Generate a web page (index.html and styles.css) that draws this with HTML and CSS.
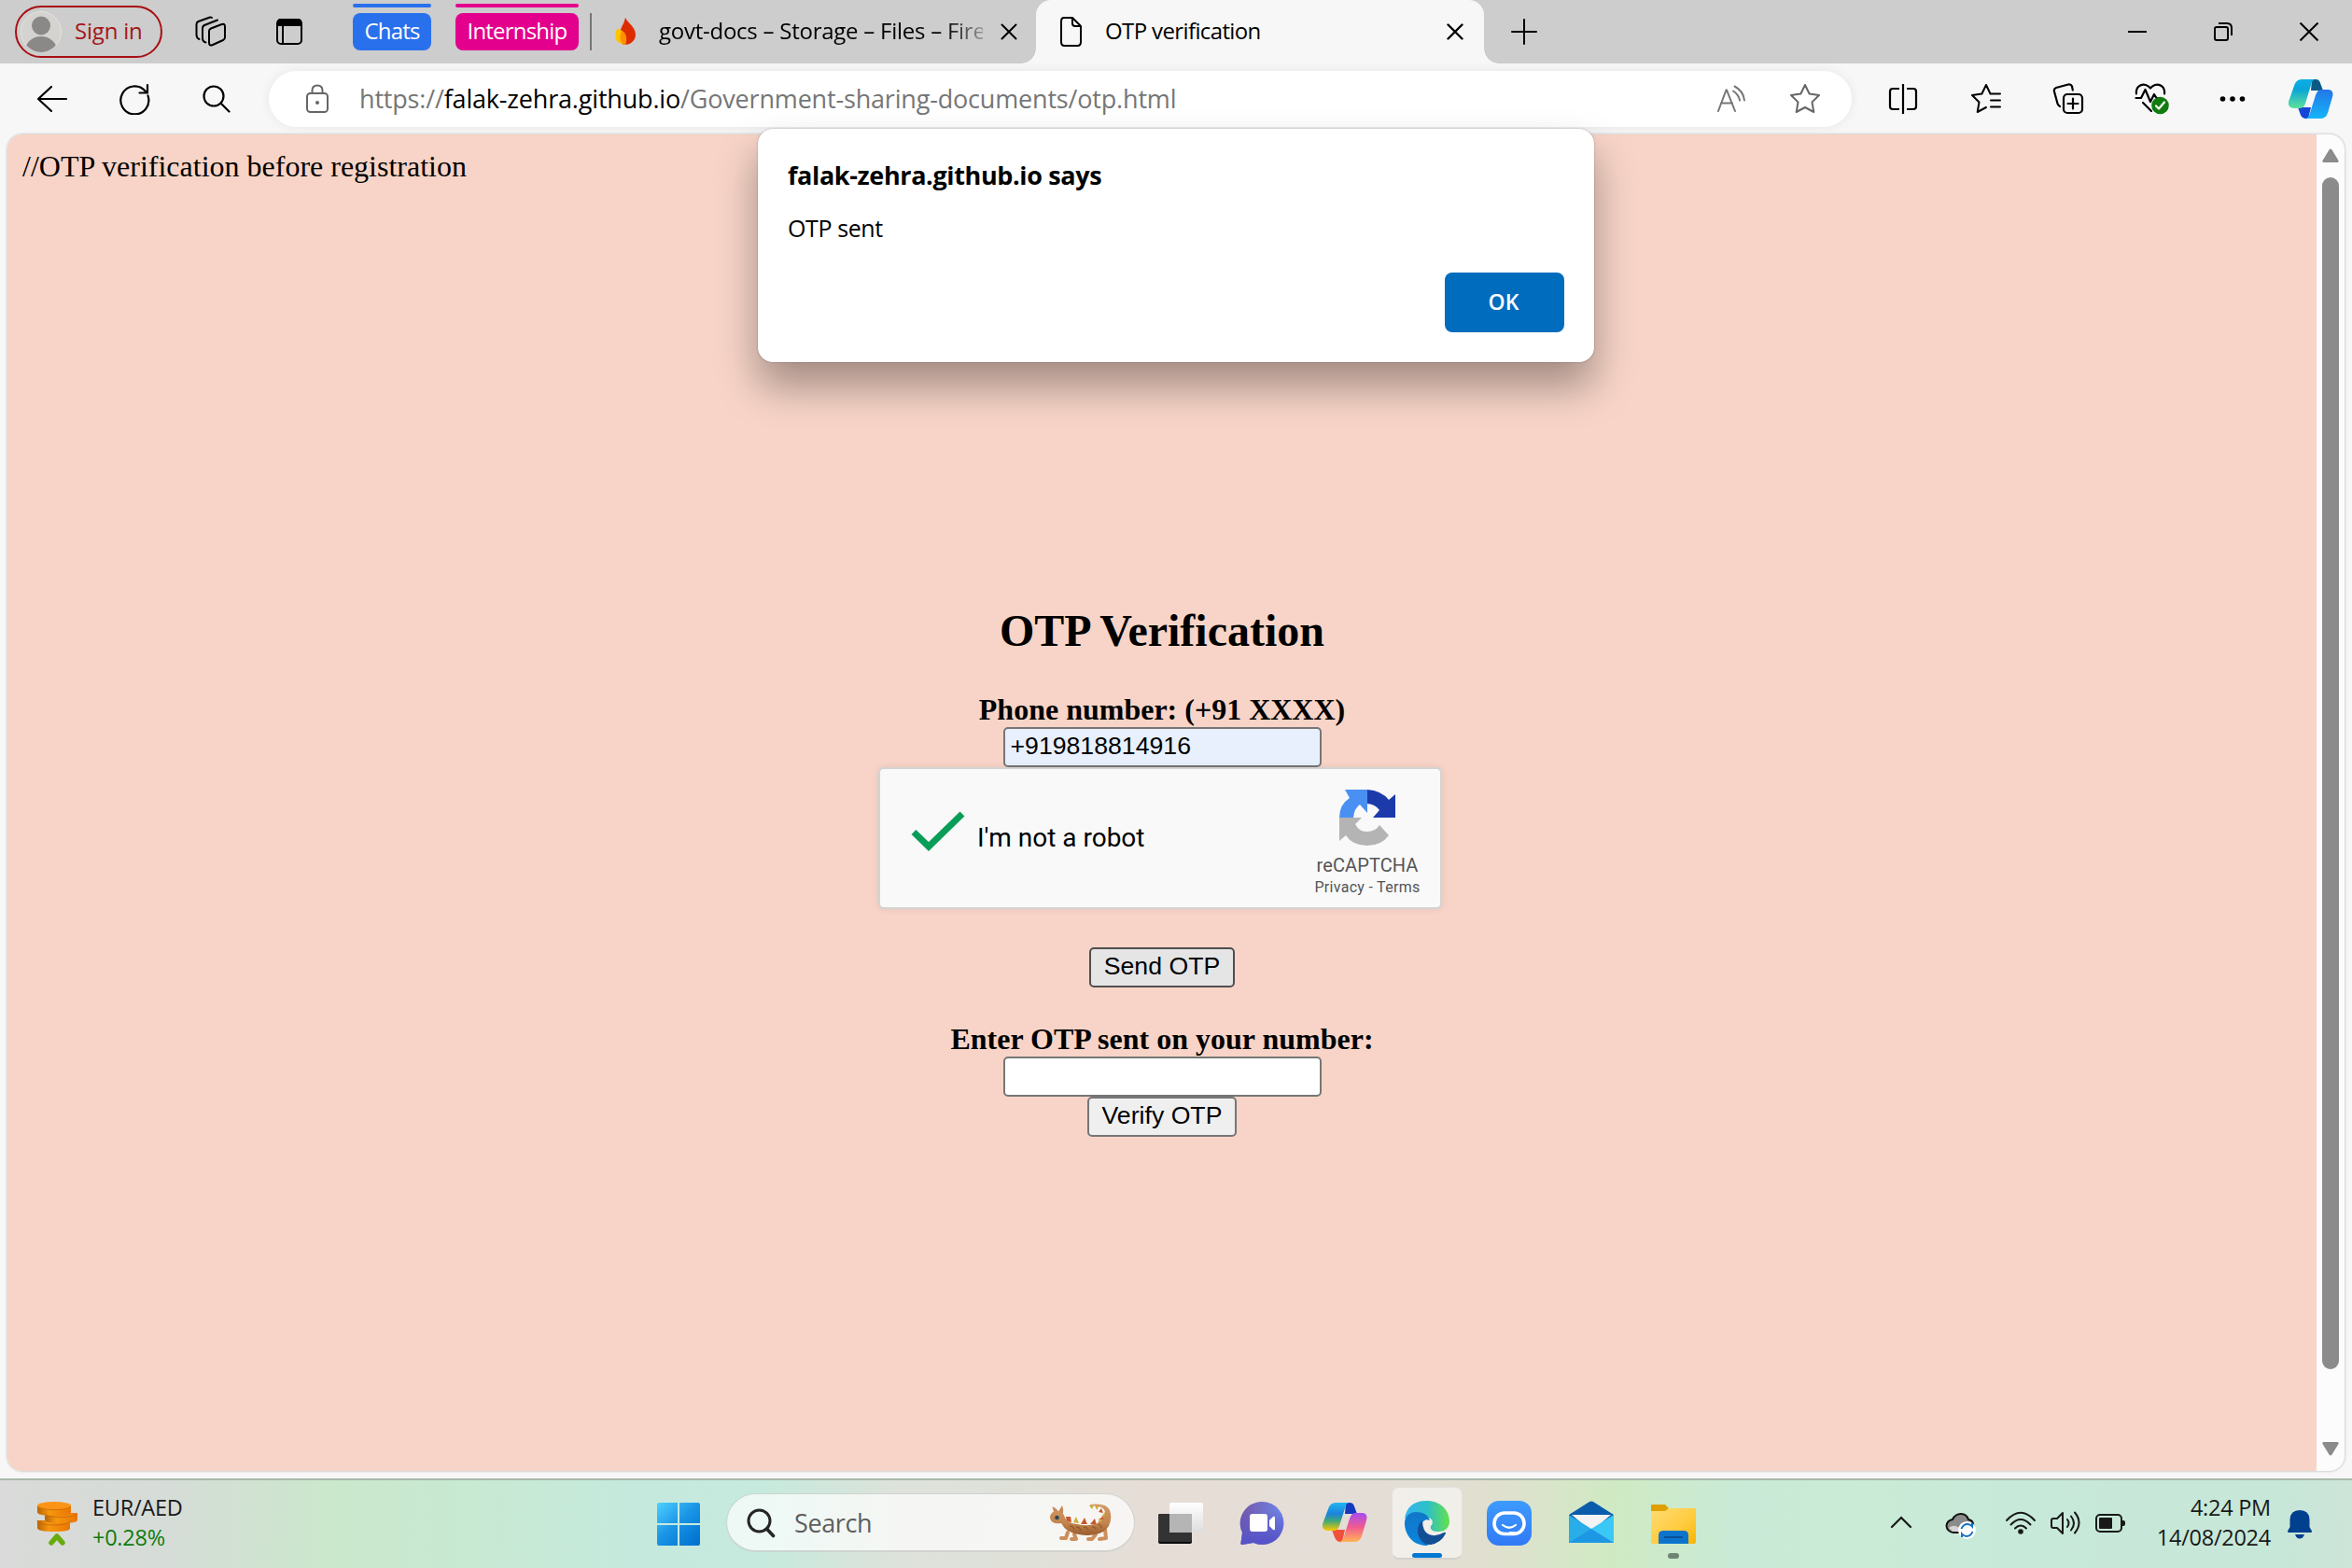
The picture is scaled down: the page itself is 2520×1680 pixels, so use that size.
FILE: index.html
```html
<!DOCTYPE html>
<html lang="en">
<head>
<meta charset="utf-8">
<title>OTP verification</title>
<link rel="stylesheet" href="styles.css">
</head>
<body>
<div class="screen">
  <header class="tabbar">
    <div class="signin">
      <svg class="avatar" width="44" height="46" viewBox="0 0 44 46"><defs><clipPath id="av"><ellipse cx="22" cy="23" rx="21" ry="22"/></clipPath></defs><circle cx="22" cy="23" r="21.5" fill="#d4d3cf" stroke="#e4e3e0"/><g fill="#8b8987" clip-path="url(#av)"><circle cx="22" cy="16.500" r="10"/><ellipse cx="22" cy="43" rx="17" ry="15"/></g></svg>
      <span>Sign in</span>
    </div>
    <svg class="i-workspaces" width="34" height="34" viewBox="0 0 34 34" fill="none" stroke="#000" stroke-width="2" stroke-linejoin="round" stroke-linecap="round"><path d="M15 16.500q0-2.200 2-3l11-4.300q4-1.400 4 2V23q0 2-2 3l-11 5q-4 1.500-4-2z"/><path d="M11.500 28.500Q8 27.500 8 24V13q0-2 2-3l14-5.500"/><path d="M4.500 25Q1.500 24 1.500 20V9q0-2 2-3L16 1.500q1-.3 2 .5"/></svg>
    <svg class="i-actions" width="30" height="30" viewBox="0 0 30 30"><rect x="2" y="2" width="26" height="26" rx="4" fill="none" stroke="#000" stroke-width="2"/><path d="M2 9V5q0-4 4-4h18q4 0 4 4v4z"/><path d="M8 9v18" stroke="#000" stroke-width="2"/></svg>
    <div class="group chats"><span>Chats</span></div>
    <div class="group intern"><span>Internship</span></div>
    <i class="divider"></i>
    <svg class="i-fire" width="24" height="30" viewBox="0 0 24 30"><path fill="#dd2c00" d="M12 0C15 6 23 10 23 18.500A11 10.500 0 0 1 8 28Z"/><path fill="#dd2c00" d="M12 0C11 7 6 10 6.500 18L12 28Z"/><path fill="#ffc400" d="M3.500 11.500C0 17 0 27 10 28.500L12 18Q9 13 3.500 11.500z"/><path fill="#ff9100" d="M8 13.500C14 17 14 24 12 29 6 28 5 22 8 13.500z"/></svg>
    <span class="tabtitle first">govt-docs – Storage – Files – Fire</span>
    <svg class="i-x1" width="18" height="18" viewBox="0 0 18 18" stroke="#000" stroke-width="2" stroke-linecap="round"><path d="M1.500 1.500l15 15m0-15l-15 15"/></svg>
    <div class="tab">
      <svg width="26" height="34" viewBox="0 0 26 34" fill="none" stroke="#000" stroke-width="2" stroke-linejoin="round"><path d="M5 2h9l9 9v17q0 4-3.500 4H5.500Q2 32 2 28V6q0-4 3-4z"/><path d="M14 2v6q0 3 3 3h6"/></svg>
      <span class="tabtitle second">OTP verification</span>
      <svg class="i-x2" width="18" height="18" viewBox="0 0 18 18" stroke="#000" stroke-width="2.400" stroke-linecap="round"><path d="M1.500 1.500l15 15m0-15l-15 15"/></svg>
    </div>
    <svg class="i-plus" width="30" height="30" viewBox="0 0 30 30" stroke="#000" stroke-width="2" stroke-linecap="round"><path d="M15 2v26M2 15h26"/></svg>
    <div class="winbtns">
      <svg width="20" height="20" viewBox="0 0 20 20" stroke="#000" stroke-width="2"><path d="M0 10h20"/></svg>
      <svg width="20" height="20" viewBox="0 0 20 20" fill="none" stroke="#000" stroke-width="2"><rect x="1" y="5" width="14" height="14" rx="2"/><path d="M5 1h9q5 0 5 5v8"/></svg>
      <svg width="20" height="20" viewBox="0 0 20 20" stroke="#000" stroke-width="2"><path d="M.5.500l19 19m0-19l-19 19"/></svg>
    </div>
  </header>

  <nav class="toolbar">
    <svg class="b-back" width="34" height="30" viewBox="0 0 34 30" fill="none" stroke="#000" stroke-width="2.200" stroke-linecap="round" stroke-linejoin="round"><path d="M16 2L2 15l14 13M2 15h30"/></svg>
    <svg class="b-refresh" width="34" height="34" viewBox="0 0 34 34" fill="none" stroke="#000" stroke-width="2.200" stroke-linecap="round"><path d="M31.500 13.500A15 15 0 1 1 29 9M31 2v8.500h-8.500"/></svg>
    <svg class="b-search" width="30" height="30" viewBox="0 0 30 30" fill="none" stroke="#000" stroke-width="2.200" stroke-linecap="round"><circle cx="12" cy="12" r="10.500"/><path d="M20 20l8.500 8.500"/></svg>
    <div class="address">
      <svg class="b-lock" width="26" height="32" viewBox="0 0 26 32" fill="none" stroke="#666" stroke-width="2"><rect x="2" y="10" width="22" height="20" rx="3.500"/><path d="M7.500 10V7q0-5.500 5.500-5.500T18.500 7v3"/><circle cx="13" cy="20" r="2" fill="#666" stroke="none"/></svg>
      <span class="url">https://<b>falak-zehra.github.io</b>/Government-sharing-documents/otp.html</span>
      <svg class="b-read" width="32" height="30" viewBox="0 0 32 30" fill="none" stroke="#767676" stroke-width="2" stroke-linecap="round"><path d="M2 28L10.500 5.500h.5L20 28M5 19.500h12M18 6.500q6 4 7 10M19.500 1.500q9.500 5 10.500 15"/></svg>
      <svg class="b-star" width="34" height="34" viewBox="0 0 34 34" fill="none" stroke="#666" stroke-width="2" stroke-linejoin="round"><path d="M17 2l4.600 9.500 10.400 1.500-7.500 7.400 1.800 10.600L17 26l-9.300 5 1.800-10.600L2 13l10.400-1.500z"/></svg>
    </div>
    <svg class="b-split" width="32" height="34" viewBox="0 0 32 34" fill="none" stroke="#000" stroke-width="2.200"><path d="M12 6H5Q2 6 2 9v16q0 3 3 3h7M20 6h7q3 0 3 3v16q0 3-3 3h-7M16 1v32"/></svg>
    <svg class="b-fav" width="34" height="34" viewBox="0 0 34 34" fill="none" stroke="#000" stroke-width="2" stroke-linejoin="round" stroke-linecap="round"><path d="M24 11.500h-2.500L17 2l-4.600 9.500L2 13l7.500 7.500L7.700 31l9.300-5M22 11.500h10M22 18.500h10M22 25.500h10"/></svg>
    <svg class="b-coll" width="34" height="34" viewBox="0 0 34 34" fill="none" stroke="#000" stroke-width="2.200" stroke-linecap="round"><rect x="12" y="12" width="20" height="20" rx="4"/><path d="M22 16.500v11M16.500 22h11M8 25q-2-1-2.500-3L2 9Q1.300 6 4 5l13-3.500q3-.5 4 2l.8 4"/></svg>
    <svg class="b-heart" width="38" height="36" viewBox="0 0 38 36" fill="none" stroke="#000" stroke-width="2.200" stroke-linecap="round" stroke-linejoin="round"><path d="M2 12.500C1 5 7 1.500 12 3q3 1 5 3.500Q19 4 22 3c5-1.500 11 2 10 9.500M9 22l9 9M1.500 17H7l4.500-9 5.500 13 4-8 2.500 4H27"/><circle cx="27.500" cy="25" r="9.300" fill="#107c10" stroke="none"/><path d="M23 25.500l3 3 6-7" stroke="#fff"/></svg>
    <svg class="b-dots" width="28" height="8" viewBox="0 0 28 8"><circle cx="3.500" cy="4" r="2.800"/><circle cx="14" cy="4" r="2.800"/><circle cx="24.500" cy="4" r="2.800"/></svg>
    <svg class="b-copilot" width="48" height="44" viewBox="0 0 48 44"><defs><linearGradient id="ca" x1="0" y1="0" x2="0" y2="1"><stop offset="0" stop-color="#0bb0e6"/><stop offset=".35" stop-color="#0aa5d8"/><stop offset="1" stop-color="#5ee29a"/></linearGradient><linearGradient id="cb" x1="0" y1="0" x2="0" y2="1"><stop offset="0" stop-color="#2477e8"/><stop offset="1" stop-color="#14b5f8"/></linearGradient></defs><path fill="#0b5a86" d="M25 1h4q4 0 5 4l3 8H24z"/><path fill="#1447d6" d="M10 31h14l-3 12q-7 1-8.500-5z"/><path fill="url(#ca)" d="M14 1h14q-3 1-4 6l-6 20q-1.500 5-6 5H5q-6-1-5-7L6 8q2-7 8-7z"/><path fill="url(#cb)" d="M34 43H18q4-1 5-6l6-19q2-6 6-6h8q6 1 4 8l-5 17q-2 6-8 6z"/></svg>
  </nav>

  <div class="viewport">
    <main class="page">
      <p class="note">//OTP verification before registration</p>
      <form class="otp" onsubmit="return false">
        <h2>OTP Verification</h2>
        <label for="phone">Phone number: (+91 XXXX)</label>
        <input id="phone" class="filled" value="+919818814916">
        <div class="captcha">
          <svg class="check" width="58" height="46" viewBox="0 0 58 46" fill="none" stroke="#0a9d58" stroke-width="7"><path d="M3 23.500l16 15.500L55 4"/></svg>
          <span class="robot">I'm not a robot</span>
          <div class="brand">
            <svg width="62" height="62" viewBox="0 0 62 62"><path fill="#4a90f2" d="M31 1v25l-8-9q-6 4-7 14H1Q1 17 12 10L7 1z"/><path fill="#1c3aa9" d="M31 1q15 1 23 11l7-6v25H37l7-8q-4-6-13-7z"/><path fill="#b4b4b4" d="M1 31h24l-7 7q5 9 13 8 9 0 13-7l10 11Q46 61 31 61 15 61 8 50l-7 6z"/></svg>
            <span class="rc">reCAPTCHA</span>
            <span class="pt">Privacy - Terms</span>
          </div>
        </div>
        <button class="send">Send OTP</button>
        <label for="code">Enter OTP sent on your number:</label>
        <input id="code">
        <button class="verify">Verify OTP</button>
      </form>
    </main>
    <div class="scroll">
      <svg width="20" height="16" viewBox="0 0 20 16" fill="#8b8b8b"><path d="M8.500 1.500q1.500-2 3 0L18.500 13q.8 2-1.500 2H3q-2.300 0-1.500-2z"/></svg>
      <i></i>
      <svg width="20" height="16" viewBox="0 0 20 16" fill="#8b8b8b"><path d="M8.500 14.500q1.500 2 3 0L18.500 3q.8-2-1.500-2H3Q.7 1 1.500 3z"/></svg>
    </div>
  </div>

  <footer class="taskbar">
    <svg class="t-coins" width="46" height="48" viewBox="0 0 46 48"><defs><linearGradient id="co"><stop stop-color="#b96405"/><stop offset=".35" stop-color="#f6960f"/><stop offset="1" stop-color="#ea7602"/></linearGradient></defs><g fill="url(#co)"><path d="M1 25v8q0 4 18 4t17-4v-8z" transform="translate(0 -4)"/><path d="M9 13v7q0 4 18 4t17-4v-7z"/><path d="M1 5v7q0 4 18 4t18-4V5z"/></g><path d="M1 21v1q2 4 17.500 4T36 22v-1M9 13.500q2 4 17.500 4T44 13.500M1 5.500q2 4 18 4t18-4" fill="none" stroke="#c76806" stroke-width=".8"/><ellipse cx="19" cy="5" rx="18" ry="4" fill="#fb9416"/><path d="M16 45l6-7 6 7" fill="none" stroke="#69ab0d" stroke-width="5.500" stroke-linecap="round" stroke-linejoin="round"/></svg>
    <div class="rate"><span>EUR/AED</span><span class="up">+0.28%</span></div>
    <svg class="t-win" width="46" height="46" viewBox="0 0 46 46"><defs><linearGradient id="wi" gradientUnits="userSpaceOnUse" x1="0" y1="0" x2="40" y2="46"><stop stop-color="#4fd0ff"/><stop offset=".5" stop-color="#1a95e6"/><stop offset="1" stop-color="#0072d0"/></linearGradient></defs><g fill="url(#wi)"><path d="M2 0h20v22H0V2q0-2 2-2zM24 0h20q2 0 2 2v20H24zM0 24h22v22H2q-2 0-2-2zM24 24h22v20q0 2-2 2H24z"/></g></svg>
    <div class="searchbox">
      <svg class="t-mag" width="31" height="32" viewBox="0 0 31 32" fill="none" stroke="#262626" stroke-width="3" stroke-linecap="round"><circle cx="13.500" cy="13.500" r="11.500"/><path d="M21.500 22l7 7.500" stroke-width="3.600"/></svg>
      <span>Search</span>
      <svg class="t-liz" width="68" height="42" viewBox="0 0 68 42"><defs><linearGradient id="li" x2="0" y2="1"><stop stop-color="#d39a66"/><stop offset=".6" stop-color="#c4854e"/><stop offset="1" stop-color="#9a5c2e"/></linearGradient></defs><path fill="#c9562b" d="M18 14h5l1 6-5-1zM34 22l4-7 3 7zM44 22l5-6 2 7zM60 18l-7-1 6-4zM58 10l-5-1 3-4z"/><path fill="#cdae3c" d="M26 20l3-6 3 7zM52 22l2-6 4 5zM62 15l-6-1 4-5zM43 2l5 0-2 4zM49 2h5l-3 5z"/><path d="M20 31l-2 6h-5M27 33l2 5h-5M50 33l-4 5h-4M60 28l1 9-7 1" fill="none" stroke="#cd8f5b" stroke-width="4" stroke-linecap="round" stroke-linejoin="round"/><path fill="#c98b5a" d="M5 9L3.500 3.500q3 0 6.500 5L14 2q2 4 1 9z"/><path fill="url(#li)" d="M1 14q1-6 8-6 6 0 8 7 3 6 13 7 12 3 22-1 8-4 8-11 0-8-16-8V1Q61-1 65 7q3 9-1 17-5 8-15 9-8 2-17 0-14-2-19-12-6 1-9-1-3-2-3-6z"/><circle cx="8.500" cy="15" r="2.300" fill="#2b4656"/><path d="M22 24q4 0 5 4m2-3q4 0 5 4m3-4q4 0 5 4m4-4q4 0 4 3m3-6q3 1 3 4" fill="none" stroke="#965c30" stroke-width="1.300"/></svg>
    </div>
    <svg class="t-view" width="48" height="46" viewBox="0 0 48 46"><defs><linearGradient id="tv" x2="0" y2="1"><stop stop-color="#fff"/><stop offset="1" stop-color="#ddd"/></linearGradient></defs><rect y="13" width="36" height="32" rx="2" fill="#0a0a0a"/><rect y="13" width="36" height="30" rx="2" fill="#333"/><rect x="12" y="1" width="36" height="32" rx="2" fill="url(#tv)"/><path fill="#b5b5b5" d="M12 13h24v20H12z"/></svg>
    <svg class="t-chat" width="48" height="48" viewBox="0 0 48 48"><defs><linearGradient id="ch" x2="1" y2="0"><stop stop-color="#7357a8"/><stop offset="1" stop-color="#6d86ea"/></linearGradient><linearGradient id="ch2" x2="0" y2="1"><stop offset=".2" stop-color="#5a55c5" stop-opacity="0"/><stop offset=".9" stop-color="#5654c8"/></linearGradient></defs><path fill="url(#ch)" d="M24 1a23 23 0 1 1-9 44L3 47q-2 0-1.500-2L3 34A23 23 0 0 1 24 1z"/><path fill="url(#ch2)" d="M24 1a23 23 0 1 1-9 44L3 47q-2 0-1.500-2L3 34A23 23 0 0 1 24 1z"/><rect x="11" y="14" width="19" height="19" rx="3" fill="#fff"/><path fill="#fff" d="M32 21l4-4q2-1 2 1v12q0 2-2 1l-4-4z"/></svg>
    <svg class="t-cop" width="48" height="46" viewBox="0 0 48 46"><defs><linearGradient id="pa" x2="0" y2="1"><stop stop-color="#20b5ef"/><stop offset=".4" stop-color="#1c83dc"/><stop offset=".65" stop-color="#40a878"/><stop offset="1" stop-color="#fac800"/></linearGradient><linearGradient id="pb" x2="0" y2="1"><stop stop-color="#a74bf0"/><stop offset=".5" stop-color="#f25c8e"/><stop offset="1" stop-color="#ffb455"/></linearGradient></defs><path fill="#1538bd" d="M25 2h4q4 0 5 4l3 8H24z"/><path fill="#f0503c" d="M10 31h14l-3 13q-6 1-8-5z"/><path fill="url(#pa)" d="M14 2h14q-3 1-4 6l-6 19q-1.500 5-6 5H5q-6-1-5-7L6 9q2-7 8-7z"/><path fill="url(#pb)" d="M34 44H18q4-1 5-6l6-19q2-6 6-6h8q6 1 4 8l-5 17q-2 6-8 6z"/></svg>
    <div class="edgetile">
      <svg width="50" height="50" viewBox="0 0 50 50"><defs><linearGradient id="ea"><stop stop-color="#35b5f0"/><stop offset=".5" stop-color="#2cc0c8"/><stop offset="1" stop-color="#66e04c"/></linearGradient><linearGradient id="eb" x2="0" y2="1"><stop stop-color="#1177c9"/><stop offset="1" stop-color="#0a84dd"/></linearGradient></defs><path fill="url(#ea)" d="M1 20Q4 1 25 1c14 0 24 10 24 22 0 8-6 11-12 11-7 0-9-3-8-6 4-4 1-9-4-9Q14 8 1 20z"/><path fill="url(#eb)" d="M1 25C1 17 7 13 13 13q12 0 15 9c-6-3-10 3-9 9q1 10 11 12-3 6-6 6C11 49 1 38 1 25z"/><path fill="#134f95" d="M20 22c-5 4-7 12-3 19q4 8 12 7 11-2 16-12 0-2-2-1-9 5-16 2-7-3-7-15z"/></svg>
      <i></i>
    </div>
    <svg class="t-zap" width="48" height="48" viewBox="0 0 48 48"><defs><linearGradient id="za" x2="0" y2="1"><stop stop-color="#3d9bff"/><stop offset="1" stop-color="#317af5"/></linearGradient></defs><rect width="48" height="48" rx="13" fill="url(#za)"/><rect x="8" y="13" width="32" height="22.500" rx="11" fill="none" stroke="#fff" stroke-width="3.600"/><path d="M24 33h7l-6 3z" fill="#fff"/><path d="M17 26q7 5.500 14 0" fill="none" stroke="#fff" stroke-width="2.200" stroke-linecap="round"/></svg>
    <svg class="t-mail" width="48" height="46" viewBox="0 0 48 46"><path fill="#0b5cab" d="M0 15L22 1q2-1 4 0l22 14v8H0z"/><path fill="#f4f4f4" d="M3 15h42L26 31h-4z"/><path fill="#3ac8f6" d="M48 15L24 30l24 15z"/><path fill="#29ade9" d="M0 15l48 30H0z"/><path fill="#1c97e4" d="M0 45l24-15 24 15z"/></svg>
    <div class="folder">
      <svg width="48" height="44" viewBox="0 0 48 44"><defs><linearGradient id="fo" x2="1" y2="1"><stop stop-color="#ffdc73"/><stop offset=".6" stop-color="#ffcb3d"/><stop offset="1" stop-color="#f8b400"/></linearGradient></defs><path fill="#dea000" d="M0 2q0-1 1-1h14l5 5v6H0z"/><path fill="url(#fo)" d="M0 8h15l4-3h28q1 0 1 1v35q0 2-2 2H2q-2 0-2-2z"/><path fill="#0c74cc" d="M8 43V34q0-5 5-5h22q5 0 5 5v9z"/><path d="M15 36h18" stroke="#0b4f96" stroke-width="2.200" stroke-linecap="round"/></svg>
      <i></i>
    </div>
    <svg class="t-up" width="24" height="14" viewBox="0 0 24 14" fill="none" stroke="#191919" stroke-width="2.200" stroke-linecap="round"><path d="M2 12L12 2l10 10"/></svg>
    <svg class="t-cloud" width="34" height="30" viewBox="0 0 34 30"><path d="M9 22q-7-1-7.500-7Q2 9 8 8q3-6 9-6 6 0 8 6 6 1 5 8-1 5-6 6z" fill="#8b8b8b" stroke="#111" stroke-width="2"/><path d="M4 17q8-6 14 4H8z" fill="#d5d5d5"/><circle cx="23.500" cy="19.500" r="9.500" fill="#fff"/><path d="M17.500 18q2-5 6.500-5 3 0 5 2.500V12M29.500 21q-2 5-6.500 5-3 0-5-2.500V27" fill="none" stroke="#1570c4" stroke-width="2"/></svg>
    <svg class="t-wifi" width="34" height="26" viewBox="0 0 34 26" fill="none" stroke="#191919" stroke-width="2" stroke-linecap="round"><path d="M2 10q15-16.500 30 0M6.500 14.500q10.500-11 21 0M11 18.500q6-6 12 0"/><circle cx="17" cy="22" r="2.800" fill="#191919" stroke="none"/></svg>
    <svg class="t-vol" width="34" height="28" viewBox="0 0 34 28" fill="none" stroke="#191919" stroke-width="2" stroke-linecap="round" stroke-linejoin="round"><path d="M2 11q0-2 2-2h4l6-6v22l-6-6H4q-2 0-2-2zM19 10q3 4 0 8M23 6.500q6 7.500 0 15M27 2.500q9 11 0 22"/></svg>
    <svg class="t-bat" width="34" height="22" viewBox="0 0 34 22"><rect x="2" y="2" width="27" height="18" rx="4" fill="none" stroke="#191919" stroke-width="2"/><rect x="5" y="5" width="14" height="12" rx="1" fill="#191919"/><path d="M30 8h1q2 0 2 2v2q0 2-2 2h-1z" fill="#191919"/></svg>
    <div class="clock"><span>4:24 PM</span><span class="date">14/08/2024</span></div>
    <svg class="t-bell" width="26" height="31" viewBox="0 0 26 31" fill="#00408f"><path d="M13 0q10 0 10.500 10v8l2.500 4.500q.3 1.500-1.500 1.500h-23Q-.3 24 0 22.500L2.500 18v-8Q3 0 13 0zM8 26h10q-1.500 4.500-5 4.500T8 26z"/></svg>
  </footer>

  <div class="dialog" role="alertdialog">
    <strong>falak-zehra.github.io says</strong>
    <p>OTP sent</p>
    <button>OK</button>
  </div>
</div>
</body>
</html>
```
FILE: styles.css
```css
* { box-sizing: border-box; }
body { margin: 0; }
svg { display: block; flex: none; }
.screen {
  position: relative;
  width: 2520px;
  height: 1680px;
  overflow: hidden;
  display: flex;
  flex-direction: column;
  background: #f7f7f7;
  font-family: "Open Sans", "Noto Sans", sans-serif;
  font-size: 24px;
  color: #000;
}
span { white-space: nowrap; flex: none; }

/* Tab strip */
.tabbar { height: 68px; flex: none; background: #cdcdcd; display: flex; align-items: center; padding-left: 16px; }
.tabbar > * { flex: none; }
.signin { width: 158px; height: 56px; border: 2px solid #a80f13; border-radius: 28px; display: flex; align-items: center; padding: 0 0 0 4px; color: #a4161a; }
.signin span { margin-left: 14px; padding-bottom: 3px; letter-spacing: -0.2px; }
.i-workspaces { margin-left: 35px; }
.i-actions { margin-left: 52px; }
.group { height: 40px; border-radius: 8px; color: #fff; text-align: center; line-height: 38px; position: relative; }
.group::before { content: ""; position: absolute; left: 0; right: 0; top: -10px; height: 4px; border-radius: 2px; background: inherit; }
.group span { letter-spacing: -0.8px; }
.chats { width: 84px; margin-left: 53px; background: #2970ed; }
.intern { width: 132px; margin-left: 26px; background: #e3008c; }
.divider { width: 2px; height: 40px; margin-left: 12px; background: #767676; }
.i-fire { margin-left: 24px; }
.tabtitle { padding-bottom: 3px; }
.first { width: 347px; margin-left: 24px; letter-spacing: -0.25px; -webkit-mask-image: linear-gradient(90deg, #000 88%, transparent 104%); mask-image: linear-gradient(90deg, #000 88%, transparent 104%); }
.i-x1 { margin-left: 19px; }
.tab { position: relative; width: 480px; height: 68px; margin-left: 20px; padding-left: 25px; background: #f7f7f7; border-radius: 16px 16px 0 0; display: flex; align-items: center; }
.tab::before, .tab::after { content: ""; position: absolute; bottom: 0; width: 16px; height: 16px; }
.tab::before { left: -16px; background: radial-gradient(circle at 0 0, transparent 15.5px, #f7f7f7 16px); }
.tab::after { right: -16px; background: radial-gradient(circle at 100% 0, transparent 15.5px, #f7f7f7 16px); }
.second { width: 168px; margin-left: 23px; letter-spacing: -0.62px; }
.i-x2 { margin-left: 198px; }
.i-plus { margin-left: 28px; }
.winbtns { display: flex; gap: 72px; margin-left: 632px; }

/* Toolbar */
.toolbar { height: 76px; flex: none; display: flex; align-items: center; padding-left: 39px; }
.toolbar > * { flex: none; }
.b-refresh { margin-left: 54px; }
.b-search { margin-left: 56px; }
.address { width: 1696px; height: 60px; margin-left: 41px; padding-left: 39px; border-radius: 30px; background: #fff; box-shadow: 0 0 12px rgba(0,0,0,.07); display: flex; align-items: center; }
.url { width: 880px; margin-left: 32px; padding-bottom: 1px; font-size: 27px; letter-spacing: -0.18px; color: #767676; }
.url b { font-weight: 400; color: #000; }
.b-read { margin-left: 574px; }
.b-star { margin-left: 46px; }
.b-split { margin-left: 39px; }
.b-fav { margin-left: 56px; }
.b-coll { margin-left: 54px; }
.b-heart { margin-left: 54px; }
.b-dots { margin-left: 53px; }
.b-copilot { margin-left: 46px; }

/* Web page */
.viewport { width: 2504px; height: 1432px; margin: 0 8px; flex: none; display: flex; border-radius: 16px; overflow: hidden; box-shadow: 0 0 3px rgba(0,0,0,.3); background: #fcfcfc; }
.page { width: 2474px; padding: 16px; background: #f7d4c7; font-family: "Liberation Serif", serif; font-size: 32px; }
.note { margin: 0; line-height: 37px; }
.otp { display: flex; flex-direction: column; align-items: center; margin-top: 451px; }
.otp h2 { margin: 0 0 39px; font-size: 48px; line-height: 55px; }
.otp label { font-weight: 700; line-height: 37px; }
.otp input, .otp button { height: 43px; font: 26.67px "Liberation Sans", Arial, sans-serif; color: #000; border: 2px solid #767676; border-radius: 5px; }
.otp input { width: 341px; margin: 0; padding: 0 6px 2px; background: #fff; outline: 0; }
.otp .filled { background: #e8f0fe; }
.otp button { padding: 0 0 2px; }
.send { width: 156px; margin: 41px 0 37px; background: #e5e5e5; }
.otp .send { border-color: #4f4f4f; margin: 41px 0 37px; }
.verify { width: 160px; background: #efefef; }
.captcha { width: 604px; height: 152px; border: 2px solid #d3d3d3; border-radius: 6px; background: #f9f9f9; box-shadow: 0 0 8px rgba(0,0,0,.08); display: flex; font-family: Roboto, sans-serif; margin-right: 4px; }
.check { margin: 44px 0 0 33px; }
.robot { margin: 57px 0 0 13px; width: 182px; font-size: 28px; line-height: 34px; }
.brand { width: 120px; margin: 21px 0 0 176px; display: flex; flex-direction: column; align-items: center; color: #555; }
.rc { margin-top: 8px; font-size: 20px; line-height: 24px; letter-spacing: 0.1px; }
.pt { font-size: 16px; line-height: 20px; margin-top: 2px; letter-spacing: 0.3px; }
.scroll { width: 30px; display: flex; flex-direction: column; align-items: center; padding-top: 15px; }
.scroll i { width: 18px; height: 1277px; margin: 15px 0 77px; border-radius: 9px; background: #8b8b8b; }

/* Taskbar */
.taskbar { height: 96px; margin-top: 8px; flex: none; border-top: 2px solid #a9b9ac; display: flex; align-items: flex-start; background: linear-gradient(92deg, #d9dad9 0, #d6dcd7 180px, #cae8cc 360px, #c8e9d2 500px, #c5eadd 680px, #c6eadd 820px, #dde2da 960px, #dfe1d9 1090px, #e6ddd7 1220px, #e4ddd6 1480px, #e0e0cf 1600px, #cfeac3 1730px, #c9ead6 1860px, #caebd5 2000px, #c7e9da 2180px, #c7e7d8 2440px, #cde4d8 2520px); color: #191919; }
.taskbar > * { flex: none; }
.t-coins { margin: 22px 0 0 39px; }
.rate, .clock { display: flex; flex-direction: column; font-size: 23.5px; line-height: 32px; margin-top: 13px; letter-spacing: -0.25px; }
.rate { width: 100px; margin-left: 14px; }
.up { color: #107c10; }
.t-win { margin: 24px 0 0 505px; }
.searchbox { width: 438px; height: 63px; margin: 14px 0 0 28px; border: 1px solid rgba(120,130,120,.3); border-bottom-width: 2px; border-radius: 32px; background: rgba(255,255,255,.7); display: flex; }
.t-mag { margin: 15px 0 0 21px; }
.searchbox span { width: 90px; margin: 12px 0 0 20px; font-size: 27px; line-height: 37px; letter-spacing: -0.4px; color: #5e5e5e; }
.t-liz { margin: 10px 0 0 183px; }
.t-view { margin: 23px 0 0 25px; }
.t-chat { margin: 22px 0 0 39px; }
.t-cop { margin: 22px 0 0 41px; }
.edgetile { width: 76px; height: 78px; margin: 7px 0 0 26px; border-radius: 8px; border: 1px solid rgba(0,0,0,.06); border-bottom: 2px solid rgba(0,0,0,.12); background: rgba(255,255,255,.5); display: flex; flex-direction: column; align-items: center; padding-top: 13px; }
.edgetile i { width: 32px; height: 6px; margin-top: 7px; border-radius: 3px; background: #0078d4; }
.t-zap { margin: 22px 0 0 26px; }
.t-mail { margin: 22px 0 0 40px; }
.folder { margin: 25px 0 0 40px; display: flex; flex-direction: column; align-items: center; }
.folder i { width: 12px; height: 6px; margin-top: 9px; border-radius: 3px; background: #6f8573; }
.t-up { margin: 38px 0 0 208px; }
.t-cloud { margin: 34px 0 0 35px; }
.t-wifi { margin: 33px 0 0 30px; }
.t-vol { margin: 32px 0 0 14px; }
.t-bat { margin: 35px 0 0 14px; }
.clock { width: 130px; margin-left: 25px; align-items: flex-end; }
.t-bell { margin: 32px 0 0 18px; }

/* Alert dialog */
.dialog { position: absolute; left: 812px; top: 138px; width: 896px; height: 250px; padding: 32px 32px 0 32px; border-radius: 16px; background: #fff; box-shadow: 0 0 2px rgba(0,0,0,.35), 0 26px 44px rgba(0,0,0,.34); display: flex; flex-direction: column; }
.dialog strong { font-size: 27px; font-weight: 700; line-height: 36px; letter-spacing: -0.37px; }
.dialog p { margin: 20px 0 0; font-size: 25px; line-height: 36px; letter-spacing: -0.4px; }
.dialog button { align-self: flex-end; width: 128px; height: 64px; margin-top: 30px; padding: 0 2px 2px 0; border: 0; border-radius: 8px; background: #006cbe; color: #fff; font: 600 23px "Open Sans", sans-serif; }
```
